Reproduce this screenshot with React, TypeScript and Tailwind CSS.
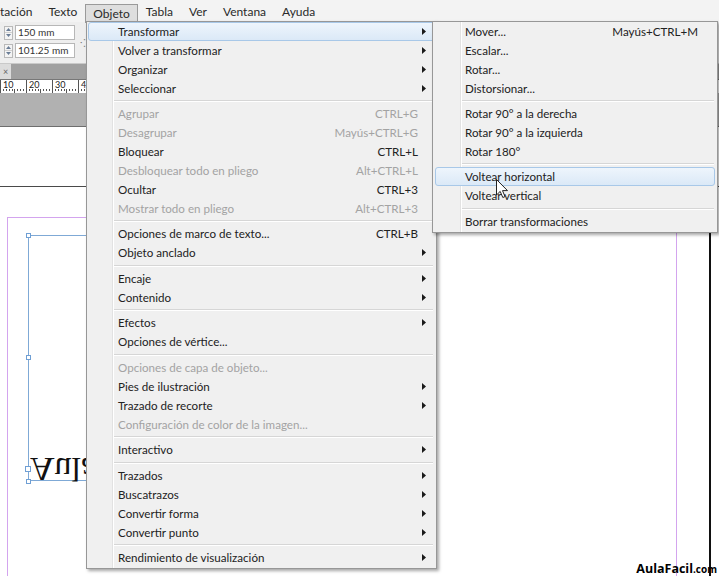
import React from "react";

type Item =
  | { t: string; s?: string; sub?: boolean; dis?: boolean; hl?: boolean }
  | { sep: number };

const mainItems: Item[] = [
  { t: "Transformar", sub: true, hl: true },
  { t: "Volver a transformar", sub: true },
  { t: "Organizar", sub: true },
  { t: "Seleccionar", sub: true },
  { sep: 6 },
  { t: "Agrupar", s: "CTRL+G", dis: true },
  { t: "Desagrupar", s: "Mayús+CTRL+G", dis: true },
  { t: "Bloquear", s: "CTRL+L" },
  { t: "Desbloquear todo en pliego", s: "Alt+CTRL+L", dis: true },
  { t: "Ocultar", s: "CTRL+3" },
  { t: "Mostrar todo en pliego", s: "Alt+CTRL+3", dis: true },
  { sep: 6 },
  { t: "Opciones de marco de texto...", s: "CTRL+B" },
  { t: "Objeto anclado", sub: true },
  { sep: 7 },
  { t: "Encaje", sub: true },
  { t: "Contenido", sub: true },
  { sep: 6 },
  { t: "Efectos", sub: true },
  { t: "Opciones de vértice..." },
  { sep: 7 },
  { t: "Opciones de capa de objeto...", dis: true },
  { t: "Pies de ilustración", sub: true },
  { t: "Trazado de recorte", sub: true },
  { t: "Configuración de color de la imagen...", dis: true },
  { sep: 6 },
  { t: "Interactivo", sub: true },
  { sep: 7 },
  { t: "Trazados", sub: true },
  { t: "Buscatrazos", sub: true },
  { t: "Convertir forma", sub: true },
  { t: "Convertir punto", sub: true },
  { sep: 6 },
  { t: "Rendimiento de visualización", sub: true },
];

const subItems: Item[] = [
  { t: "Mover...", s: "Mayús+CTRL+M" },
  { t: "Escalar..." },
  { t: "Rotar..." },
  { t: "Distorsionar..." },
  { sep: 6 },
  { t: "Rotar 90° a la derecha" },
  { t: "Rotar 90° a la izquierda" },
  { t: "Rotar 180°" },
  { sep: 6 },
  { t: "Voltear horizontal", hl: true },
  { t: "Voltear vertical" },
  { sep: 7 },
  { t: "Borrar transformaciones" },
];

function Arrow({ hl }: { hl?: boolean }) {
  return (
    <svg
      width="4"
      height="7"
      viewBox="0 0 4 7"
      className={hl ? "absolute right-[8px] top-[5px]" : "absolute right-[10px] top-[6px]"}
    >
      <path d="M0 0 L4 3.5 L0 7 Z" fill="#1a1a1a" />
    </svg>
  );
}

function MenuList({
  items,
  textPl,
  shortPr,
  sepMl,
  hlMx,
  hlShift,
}: {
  items: Item[];
  textPl: string;
  shortPr: string;
  sepMl: string;
  hlMx: string;
  hlShift: string;
}) {
  return (
    <>
      {items.map((it, i) => {
        if ("sep" in it) {
          return (
            <div key={i} className={it.sep === 7 ? "h-[7px] flex items-center" : "h-[6px] flex items-center"}>
              <div className={`${sepMl} mr-[3px] flex-1 h-[2px] border-t border-[#d6d6d6] border-b border-b-white`} />
            </div>
          );
        }
        return (
          <div
            key={i}
            className={`relative h-[19px] flex items-center ${
              it.hl ? `${hlMx} rounded-[3px] border border-[#a8c8e8] bg-gradient-to-b from-[#eef5fc] to-[#dbe9f7]` : ""
            }`}
          >
            <span
              className={`${textPl} ${it.hl ? hlShift : ""} flex-1 whitespace-nowrap ${
                it.dis ? "text-[#a3a3a3]" : "text-[#222]"
              }`}
            >
              {it.t}
            </span>
            {it.s && (
              <span className={`${shortPr} whitespace-nowrap ${it.dis ? "text-[#a3a3a3]" : "text-[#222]"}`}>{it.s}</span>
            )}
            {it.sub && <Arrow hl={it.hl} />}
          </div>
        );
      })}
    </>
  );
}

export default function App() {
  const font = { fontFamily: "Lato, 'Noto Sans', sans-serif" } as React.CSSProperties;
  return (
    <div className="relative w-[719px] h-[576px] overflow-hidden bg-white text-[11.6px]" style={font}>
      {/* menu bar */}
      <div className="h-[22px] bg-[#f3f3f3] flex items-end pb-[1px] text-[#2a2a2a] text-[12px]">
        <div className="pr-[8px] h-[18px] flex items-center">tación</div>
        <div className="px-[8px] h-[18px] flex items-center">Texto</div>
        <div className="px-[7px] flex items-center bg-[#dedede] border border-b-0 border-[#9a9a9a] -mb-[2px] h-[19px]">
          Objeto
        </div>
        <div className="px-[8px] h-[18px] flex items-center">Tabla</div>
        <div className="px-[8px] h-[18px] flex items-center">Ver</div>
        <div className="px-[8px] h-[18px] flex items-center">Ventana</div>
        <div className="px-[8px] h-[18px] flex items-center">Ayuda</div>
      </div>

      {/* control toolbar */}
      <div className="h-[41px] bg-[#eeeeee] flex items-start pt-[3px] pl-[4px] gap-[1px]">
        <div className="flex flex-col gap-[3px]">
          {["150 mm", "101.25 mm"].map((v) => (
            <div key={v} className="flex items-center gap-[2px]">
              <div className="w-[9px] h-[14px] flex flex-col border border-[#b9b9b9] bg-[#f4f4f4]">
                <div className="flex-1 flex items-center justify-center">
                  <svg width="5" height="3" viewBox="0 0 5 3">
                    <path d="M0 3 L2.5 0 L5 3Z" fill="#6a7d96" />
                  </svg>
                </div>
                <div className="flex-1 flex items-center justify-center border-t border-[#d0d0d0]">
                  <svg width="5" height="3" viewBox="0 0 5 3">
                    <path d="M0 0 L2.5 3 L5 0Z" fill="#6a7d96" />
                  </svg>
                </div>
              </div>
              <div className="w-[60px] h-[15px] bg-white border border-[#b7b7b7] text-[10px] leading-[13px] pl-[2px] text-[#333]">
                {v}
              </div>
            </div>
          ))}
        </div>
        <div className="ml-[4px] mt-[12px] text-[#777] text-[11px] leading-none">⁘</div>
      </div>

      {/* tab strip */}
      <div className="h-[16px] bg-[#a0a0a0] border-t border-[#c9c9c9] flex">
        <div className="w-[11px] h-full bg-[#dcdcdc] flex items-center justify-center text-[9px] leading-none text-[#666]">×</div>
      </div>

      {/* ruler */}
      <div className="h-[14px] bg-white border-t border-[#777] flex text-[9px] leading-[9px] text-[#222]">
        {["10", "20", "30", "4"].map((n, i) => (
          <div key={i} className="relative w-[26px] h-full border-l border-[#555] pl-[2px]">
            {n}
            <div className="absolute bottom-0 left-0 right-0 flex justify-between px-[2px]">
              {[0, 1, 2, 3, 4, 5, 6, 7].map((k) => (
                <div key={k} className={k === 4 ? "w-px h-[4px] bg-[#555]" : "w-px h-[2px] bg-[#555]"} />
              ))}
            </div>
          </div>
        ))}
      </div>

      {/* pasteboard band */}
      <div className="h-[34px] bg-[#b1b1b1] border-b border-[#6e6e6e]" />

      {/* canvas */}
      <div className="relative h-[449px] bg-white">
        <div className="absolute left-0 right-0 top-[59px] h-[1px] bg-[#4a4a4a]" />
        <div className="absolute left-[7px] top-[90px] w-[670px] h-[400px] border-l border-t border-r border-[#d3a4ee]" />
        <div className="absolute left-[709px] top-[60px] w-[2px] h-[400px] bg-[#111]" />
        <div className="absolute left-[28px] top-[108px] w-[300px] h-[246px] border-l border-t border-b border-[#7fa9d6]" />
        <div className="absolute left-[26px] top-[106px] w-[5px] h-[5px] bg-white border border-[#6f9fd4]" />
        <div className="absolute left-[26px] top-[228px] w-[5px] h-[5px] bg-white border border-[#6f9fd4]" />
        <div className="absolute left-[25px] top-[339px] w-[6px] h-[6px] bg-white border border-[#6f9fd4]" />
        <div className="absolute left-[26px] top-[352px] w-[5px] h-[5px] bg-white border border-[#6f9fd4]" />
        <div
          className="absolute left-[30px] top-[325px] text-[34px] leading-[34px] text-[#111] -scale-y-100"
          style={{ fontFamily: "'Liberation Serif', serif" }}
        >
          Aula
        </div>
        <div
          className="absolute right-[2px] bottom-0 font-bold text-black leading-[14px]"
          style={{ fontFamily: "'Open Sans', sans-serif" }}
        >
          <span className="text-[12.5px]">AulaFacil</span>
          <span className="text-[10px]">.com</span>
        </div>
      </div>

      {/* main dropdown */}
      <div className="absolute left-[86px] top-[21px] w-[351px] bg-[#f0f0f0] border border-[#979797] pb-[1px] shadow-[2px_2px_3px_rgba(0,0,0,0.35)]">
        <div className="absolute left-[25px] top-0 bottom-0 w-[2px] border-l border-[#e2e2e2] border-r border-r-white" />
        <MenuList
          items={mainItems}
          textPl="pl-[31px]"
          shortPr="pr-[18px]"
          sepMl="ml-[27px]"
          hlMx="mx-[1px]"
          hlShift="-ml-[2px]"
        />
      </div>

      {/* submenu */}
      <div className="absolute left-[432px] top-[21px] w-[286px] bg-[#f0f0f0] border border-[#979797] pb-[1px] shadow-[2px_2px_3px_rgba(0,0,0,0.35)]">
        <div className="absolute left-[27px] top-0 bottom-0 w-[2px] border-l border-[#e2e2e2] border-r border-r-white" />
        <MenuList
          items={subItems}
          textPl="pl-[32px]"
          shortPr="pr-[19px]"
          sepMl="ml-[29px]"
          hlMx="mx-[2px]"
          hlShift="-ml-[3px]"
        />
      </div>

      {/* cursor */}
      <svg className="absolute left-[496px] top-[179px]" width="13" height="20" viewBox="0 0 13 20">
        <path
          d="M0.5 0.5 L0.5 16 L4.2 12.4 L6.8 18.5 L9 17.6 L6.5 11.6 L11.5 11.6 Z"
          fill="#fff"
          stroke="#222"
          strokeWidth="1"
          strokeLinejoin="round"
        />
      </svg>
    </div>
  );
}
